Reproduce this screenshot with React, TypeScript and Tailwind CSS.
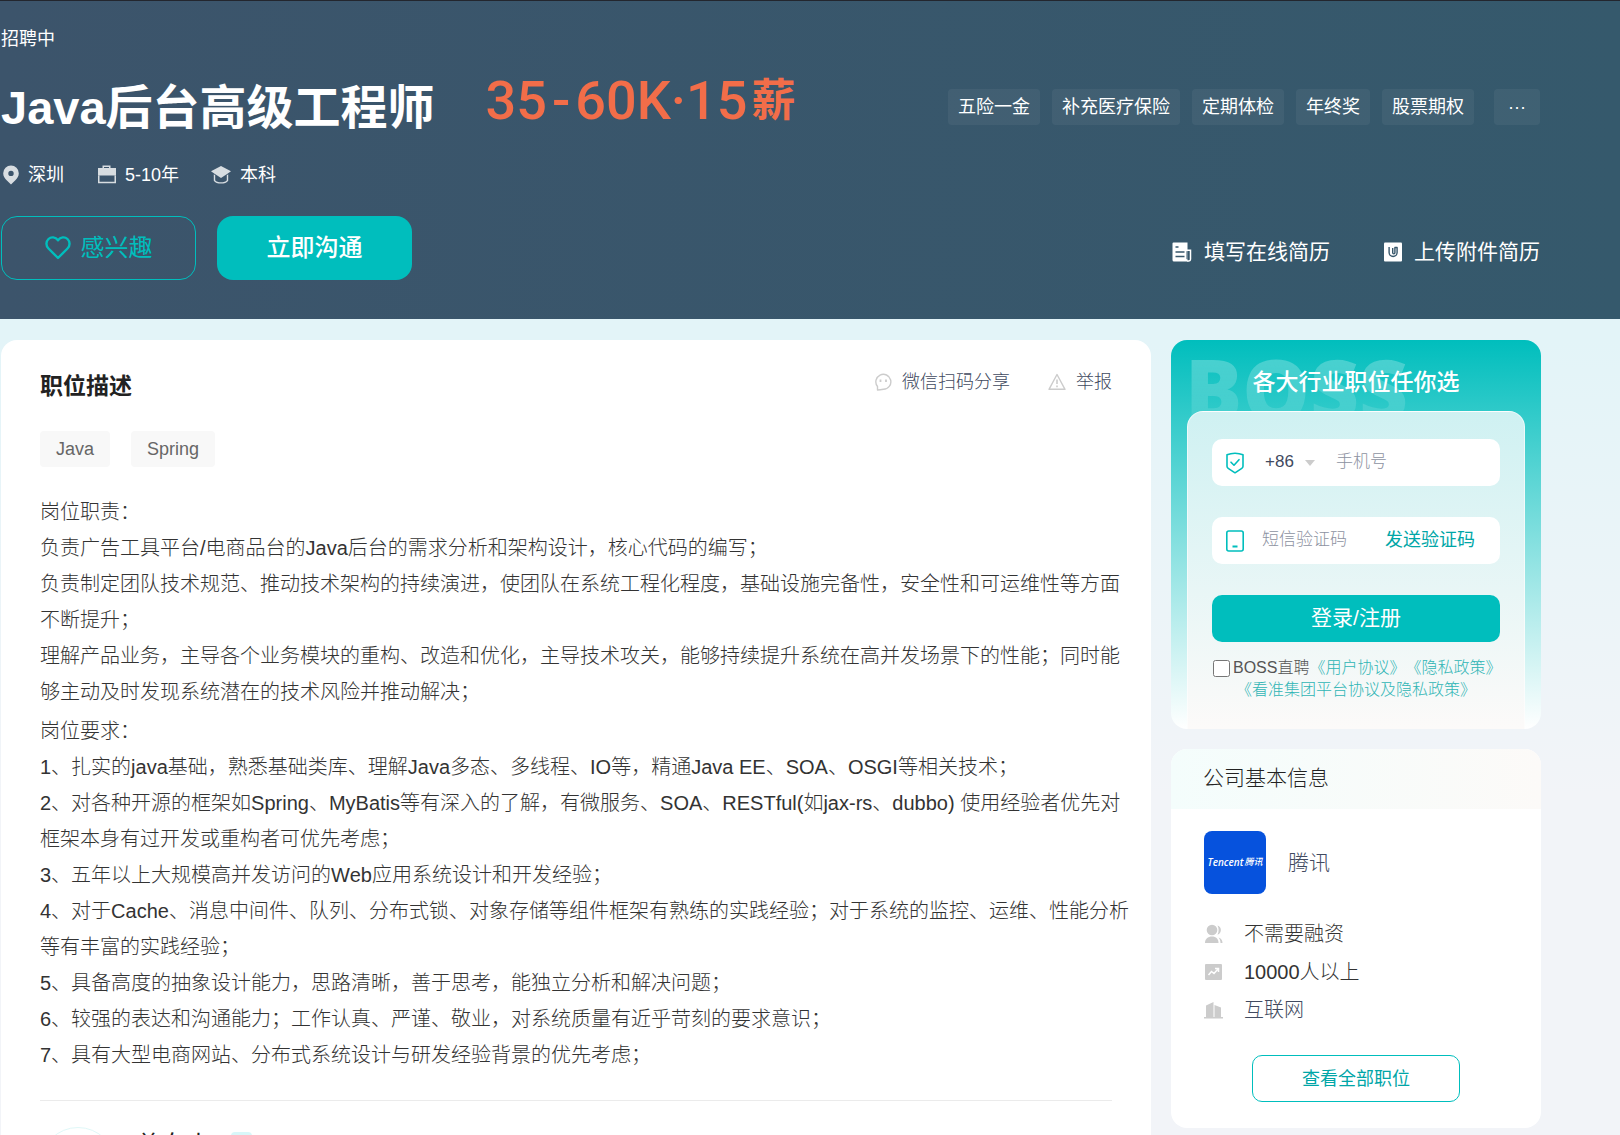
import type { ReactNode } from 'react';

const benefits = ['五险一金', '补充医疗保险', '定期体检', '年终奖', '股票期权'];

const skills = ['Java', 'Spring'];

const duties = [
  '岗位职责：',
  '负责广告工具平台/电商品台的Java后台的需求分析和架构设计，核心代码的编写；',
  '负责制定团队技术规范、推动技术架构的持续演进，使团队在系统工程化程度，基础设施完备性，安全性和可运维性等方面不断提升；',
  '理解产品业务，主导各个业务模块的重构、改造和优化，主导技术攻关，能够持续提升系统在高并发场景下的性能；同时能够主动及时发现系统潜在的技术风险并推动解决；',
];

const requirements = [
  '岗位要求：',
  '1、扎实的java基础，熟悉基础类库、理解Java多态、多线程、IO等，精通Java EE、SOA、OSGI等相关技术；',
  '2、对各种开源的框架如Spring、MyBatis等有深入的了解，有微服务、SOA、RESTful(如jax-rs、dubbo) 使用经验者优先对框架本身有过开发或重构者可优先考虑；',
  '3、五年以上大规模高并发访问的Web应用系统设计和开发经验；',
  '4、对于Cache、消息中间件、队列、分布式锁、对象存储等组件框架有熟练的实践经验；对于系统的监控、运维、性能分析等有丰富的实践经验；',
  '5、具备高度的抽象设计能力，思路清晰，善于思考，能独立分析和解决问题；',
  '6、较强的表达和沟通能力；工作认真、严谨、敬业，对系统质量有近乎苛刻的要求意识；',
  '7、具有大型电商网站、分布式系统设计与研发经验背景的优先考虑；',
];

function PinIcon() {
  return (
    <svg width="18" height="20" viewBox="0 0 18 20" fill="#fff" fillOpacity="0.8">
      <path fillRule="evenodd" d="M10 .5a7.800 7.800 0 0 1 7.800 7.800c0 3-1.700 5.300-3.700 7.300L10 19.500l-4.100-3.900c-2-2-3.700-4.300-3.700-7.300A7.800 7.800 0 0 1 10 .5Zm0 5.200a2.700 2.700 0 1 0 0 5.400 2.700 2.700 0 0 0 0-5.400Z" />
    </svg>
  );
}

function BriefcaseIcon() {
  return (
    <svg width="20" height="20" viewBox="0 0 20 20" fill="#fff" fillOpacity="0.8">
      <path fillRule="evenodd" d="M6.500.5h8V3H20v7.500H2V3h4.500V.5Zm1.500 1.500v1h5V2H8Z" />
      <path d="M2 10.500h1.500v6.300h15v-6.300H20v7.800H2v-7.800Z" />
    </svg>
  );
}

function DegreeIcon() {
  return (
    <svg width="20" height="20" viewBox="0 0 20 20" fill="#fff" fillOpacity="0.8">
      <path d="M10 1l10 5.200-3.200 2.300L10 13 3.200 8.500 0 6.200 10 1Z" />
      <path d="M2.800 9.300L4.200 10.200v5.100c1 1.400 3.100 2 5.800 2s4.800-.6 5.800-2v-5.100l1.400-.9v6.500c-1.200 2-4 2.800-7.200 2.800s-6-.8-7.200-2.800V9.300Z" />
    </svg>
  );
}

function HeartIcon() {
  return (
    <svg width="26" height="24" viewBox="0 0 26 24" fill="none" stroke="#00bebd" strokeWidth="2.400" strokeLinejoin="round">
      <path d="M13 4.200C10.500.9 6.200.4 3.500 3c-2.800 2.700-2.700 6.800 0 9.500L13 22l9.500-9.500c2.700-2.700 2.800-6.800 0-9.500-2.700-2.600-7-2.100-9.500 1.200Z" />
    </svg>
  );
}

function ResumeIcon() {
  return (
    <svg width="20" height="20" viewBox="0 0 20 20">
      <path d="M1.500.5h14V19.500H2a1.500 1.500 0 0 1-1.500-1.500V1.500a1 1 0 0 1 1-1Z" fill="#fff" />
      <path d="M15 8.300h3.500v9a1.600 1.600 0 0 1-1.600 1.600H15" fill="none" stroke="#fff" strokeWidth="1.500" />
      <path d="M15 9.200v8" stroke="#37576b" strokeWidth="1" />
      <path d="M3.500 5h3M3.500 10h9M3.500 14.500h9" stroke="#37576b" strokeWidth="1.600" />
    </svg>
  );
}

function AttachIcon() {
  return (
    <svg width="18" height="20" viewBox="0 0 18 20">
      <rect y="0.500" width="18" height="19" rx="1" fill="#fff" />
      <path d="M8.700 6v4.800a1.100 1.100 0 0 0 2.200 0V5.500h2.200v5a4 4 0 0 1-8 0V5" fill="none" stroke="#37576b" strokeWidth="1.400" strokeLinejoin="round" />
    </svg>
  );
}

function WechatIcon() {
  return (
    <svg width="17" height="18" viewBox="0 0 17 18" fill="none" stroke="#ccc" strokeWidth="1.400">
      <path d="M2.500 17v-3.500A7.500 7.500 0 1 1 8.500 16.300c-1.500.3-4 .7-6 .7Z" strokeLinejoin="round" />
      <path d="M5.500 6.500v2.400M11 6.500v2.400" strokeWidth="1.800" />
    </svg>
  );
}

function ReportIcon() {
  return (
    <svg width="18" height="18" viewBox="0 0 18 18" fill="none" stroke="#ccc" strokeWidth="1.400">
      <path d="M9 1.500L17 16.300H1L9 1.500Z" strokeLinejoin="round" />
      <path d="M9 6.500v4.500M9 12.500v1.800" strokeWidth="1.600" />
    </svg>
  );
}

function ShieldIcon() {
  return (
    <svg width="18" height="22" viewBox="0 0 18 22" fill="none" stroke="#00bebd" strokeWidth="1.600" strokeLinejoin="round">
      <path d="M9 1.200c2.800 0 5.500.5 8 1.600v11.500c0 1-.4 1.600-1.200 2.100L9 20.800l-6.800-4.400C1.400 15.900 1 15.300 1 14.300V2.800c2.500-1.100 5.200-1.600 8-1.600Z" />
      <path d="M5 10.200l3 3 5-5.500" strokeLinecap="round" />
    </svg>
  );
}

function PhoneIcon() {
  return (
    <svg width="18" height="22" viewBox="0 0 18 22" fill="none" stroke="#00bebd" strokeWidth="1.600">
      <rect x="0.800" y="1" width="16.400" height="20" rx="2" />
      <path d="M6.500 16.500h5" strokeWidth="1.800" />
    </svg>
  );
}

function PeopleIcon() {
  return (
    <svg width="19" height="20" viewBox="0 0 19 20" fill="#ccc">
      <circle cx="8" cy="6" r="5.300" />
      <path d="M1 19c0-4 2.800-6.500 7-6.500s6.500 2.500 6.500 6.500H1Z" />
      <path d="M13.500 1.500c4.500 1 4.500 8 0 9.200 1.500-2.700 1.500-6.500 0-9.200ZM14.500 13.500c2.500.6 4 2.800 4 5.500h-2c0-2.200-.6-4-2-5.500Z" />
    </svg>
  );
}

function ScaleIcon() {
  return (
    <svg width="19" height="18" viewBox="0 0 19 18">
      <rect x="1" y="1" width="17" height="16" rx="1" fill="#ccc" />
      <path d="M4.500 12l3-3.500 2.500 2 4-4.500M11 5.500h3.500V9" fill="none" stroke="#fff" strokeWidth="1.500" />
    </svg>
  );
}

function BuildingIcon() {
  return (
    <svg width="19" height="18" viewBox="0 0 19 18" fill="#ccc">
      <path d="M2 4.500L9.500 1v15.500H2v-12ZM10.500 4l6.500 2.500v10h-6.500V4ZM0 16h19v1.500H0V16Z" />
    </svg>
  );
}

function Meta({ icon, children }: { icon: ReactNode; children: ReactNode }) {
  return (
    <li className="flex items-center gap-[9px]">
      {icon}
      <span>{children}</span>
    </li>
  );
}

function CompanyRow({ icon, children }: { icon: ReactNode; children: ReactNode }) {
  return (
    <li className="flex items-center gap-[21px] leading-[38px]">
      {icon}
      {children}
    </li>
  );
}

function JobBanner() {
  return (
    <header className="h-[319px] border-t border-[#23262e] bg-linear-to-r/srgb from-[#3c546b] to-[#35596c] pl-px pr-20 text-white">
      <p className="pt-6 text-lg leading-7">招聘中</p>

      <div className="flex items-start justify-between">
        <div className="flex items-start">
          <h1 className="pt-[21px] text-[47px] leading-[68px] font-bold">Java后台高级工程师</h1>
          <p className="ml-[51px] flex items-center pt-[14px] font-['Roboto','Noto_Sans_CJK_SC',sans-serif] text-[54px] leading-[68px] font-medium text-[#f26d49]">
            35<span className="mx-[5px]">-</span>60K·15<span className="ml-1 text-[44px] font-bold">薪</span>
          </p>
        </div>
        <div className="flex pt-9">
          <ul className="flex gap-3">
            {benefits.map((benefit) => (
              <li key={benefit} className="rounded-sm bg-white/5 px-[10px] text-lg leading-9">
                {benefit}
              </li>
            ))}
          </ul>
          <button className="ml-5 w-[46px] rounded-sm bg-white/5 text-lg leading-9">···</button>
        </div>
      </div>

      <ul className="mt-[19px] flex gap-8 text-lg leading-7">
        <Meta icon={<PinIcon />}>深圳</Meta>
        <Meta icon={<BriefcaseIcon />}>5-10年</Meta>
        <Meta icon={<DegreeIcon />}>本科</Meta>
      </ul>

      <div className="mt-[27px] flex items-center justify-between">
        <div className="flex gap-[21px]">
          <button className="flex h-16 w-[195px] items-center justify-center gap-[10px] rounded-2xl border border-[#00bebd] text-2xl text-[#00bebd]">
            <HeartIcon />
            感兴趣
          </button>
          <button className="h-16 w-[195px] rounded-2xl bg-[#00bebd] text-2xl font-medium">立即沟通</button>
        </div>
        <div className="flex gap-[54px] pt-2 text-[21px] leading-7">
          <a href="#resume" className="flex items-center gap-3">
            <ResumeIcon />
            填写在线简历
          </a>
          <a href="#upload" className="flex items-center gap-3">
            <AttachIcon />
            上传附件简历
          </a>
        </div>
      </div>
    </header>
  );
}

function JobDetail() {
  return (
    <section className="min-w-0 flex-1 rounded-t-2xl bg-white px-[39px]">
      <div className="flex items-start justify-between pt-7">
        <h2 className="text-[23px] leading-9 font-bold text-[#222]">职位描述</h2>
        <div className="flex gap-[38px] text-lg leading-7 font-light text-[#414a60]">
          <a href="#share" className="flex items-center gap-[10px]">
            <WechatIcon />
            微信扫码分享
          </a>
          <a href="#report" className="flex items-center gap-[10px]">
            <ReportIcon />
            举报
          </a>
        </div>
      </div>

      <ul className="mt-[27px] flex gap-[21px]">
        {skills.map((skill) => (
          <li key={skill} className="rounded-sm bg-[#f8f8f8] px-4 text-lg leading-9 text-[#666]">
            {skill}
          </li>
        ))}
      </ul>

      <div className="mt-[27px] -mr-5 text-xl leading-9 font-light text-[#333]">
        <div>
          {duties.map((line) => (
            <p key={line}>{line}</p>
          ))}
        </div>
        <div className="mt-[3px] mb-[2px]">
          {requirements.map((line) => (
            <p key={line}>{line}</p>
          ))}
        </div>
      </div>

      <div className="mt-[27px] flex gap-5 border-t border-[#ebebeb] pt-[26px]">
        <div className="size-[76px] rounded-full border border-[#e0f8f8]" />
        <p className="pt-1 text-[25px] leading-7 text-[#222]">曾女士</p>
        <span className="mt-[5px] size-[21px] rounded-sm bg-[#d8f7f9]" />
      </div>
    </section>
  );
}

function LoginCard() {
  return (
    <section className="relative overflow-hidden rounded-2xl bg-linear-to-b/srgb from-[#00bebd] to-white px-4">
      <div
        aria-hidden="true"
        className="absolute top-0 left-[14px] bg-linear-to-b/srgb from-white/30 to-white/5 bg-clip-text font-['Open_Sans',sans-serif] text-[85px] leading-[96px] font-extrabold text-transparent"
      >
        BOSS
      </div>
      <h2 className="relative pt-6 pb-[11px] text-center text-[23px] leading-9 font-medium text-white">各大行业职位任你选</h2>
      <form className="relative rounded-t-2xl border border-b-0 border-white/60 bg-linear-to-b/srgb from-[#cff1f2] to-[#fcfaf9] px-6 pt-[27px] pb-[29px]">
        <div className="flex h-[47px] items-center rounded-[10px] bg-white pl-[14px] text-[17px]">
          <ShieldIcon />
          <div className="relative ml-[21px] pb-[2px]">
            <select aria-label="区号" className="w-[50px] appearance-none bg-transparent text-[#414a60] outline-none">
              <option>+86</option>
            </select>
            <svg className="pointer-events-none absolute top-[11px] right-0" width="10" height="6" viewBox="0 0 10 6" fill="#ccc">
              <path d="M0 0h10L5 6Z" />
            </svg>
          </div>
          <input type="tel" aria-label="手机号" placeholder="手机号" className="ml-[21px] w-full min-w-0 flex-1 pb-[2px] font-light outline-none placeholder:text-[#8d92a1]" />
        </div>

        <div className="mt-[31px] flex h-[47px] items-center rounded-[10px] bg-white pr-[25px] pl-[14px]">
          <PhoneIcon />
          <input type="text" aria-label="短信验证码" placeholder="短信验证码" className="ml-[18px] w-full min-w-0 flex-1 pb-[2px] text-[17px] font-light outline-none placeholder:text-[#8d92a1]" />
          <button type="button" className="pb-[2px] text-lg text-[#00a6a7]">
            发送验证码
          </button>
        </div>

        <button type="submit" className="mt-[31px] block h-[47px] w-full rounded-[10px] bg-[#00bebd] pb-[2px] text-[21px] text-white">
          登录/注册
        </button>

        <div className="mt-[15px] text-base leading-[22px] font-light text-[#2fb5b5]">
          <div className="flex items-center whitespace-nowrap">
            <input id="agree" type="checkbox" className="mr-[3px] ml-px size-[17px] shrink-0" />
            <label htmlFor="agree" className="text-[#555]">
              BOSS直聘
            </label>
            <a href="#agreement">《用户协议》</a>
            <a href="#privacy">《隐私政策》</a>
          </div>
          <a href="#platform" className="-mb-px block text-center">
            《看准集团平台协议及隐私政策》
          </a>
        </div>
      </form>
    </section>
  );
}

function CompanyCard() {
  return (
    <section className="overflow-hidden rounded-2xl bg-white">
      <h2 className="bg-linear-to-r/srgb from-[#f4fdfc] to-[#fcfaf8] px-8 pb-[2px] text-[21px] leading-[58px] font-light text-[#222]">公司基本信息</h2>
      <div className="px-[33px] pt-[22px] pb-[26px]">
        <a href="#company" className="flex items-center gap-[22px] text-[21px] font-light text-[#414a60]">
          <span className="flex h-[63px] w-[62px] items-center justify-center gap-px rounded-lg bg-[#0652dd] text-white">
            <span className="font-['Open_Sans',sans-serif] text-[10px] font-semibold italic">Tencent</span>
            <span className="text-[9px] font-medium italic">腾讯</span>
          </span>
          腾讯
        </a>
        <ul className="mt-[21px] text-xl font-light text-[#333]">
          <CompanyRow icon={<PeopleIcon />}>不需要融资</CompanyRow>
          <CompanyRow icon={<ScaleIcon />}>10000人以上</CompanyRow>
          <CompanyRow icon={<BuildingIcon />}>
            <a href="#industry" className="text-[#414a60]">
              互联网
            </a>
          </CompanyRow>
        </ul>
        <button className="mx-auto mt-[26px] block h-[47px] w-[208px] rounded-[10px] border border-[#00bebd] text-lg text-[#00a6a7]">
          查看全部职位
        </button>
      </div>
    </section>
  );
}

export default function App() {
  return (
    <div className="h-screen overflow-hidden bg-linear-to-b/srgb from-[#e3f4f8] from-30% to-[#f2f4f8] to-70% font-['Liberation_Sans','Noto_Sans_CJK_SC',sans-serif]">
      <JobBanner />
      <main className="flex gap-5 pt-[21px] pr-[79px] pl-px">
        <JobDetail />
        <aside className="w-[370px] shrink-0 space-y-5">
          <LoginCard />
          <CompanyCard />
        </aside>
      </main>
    </div>
  );
}
